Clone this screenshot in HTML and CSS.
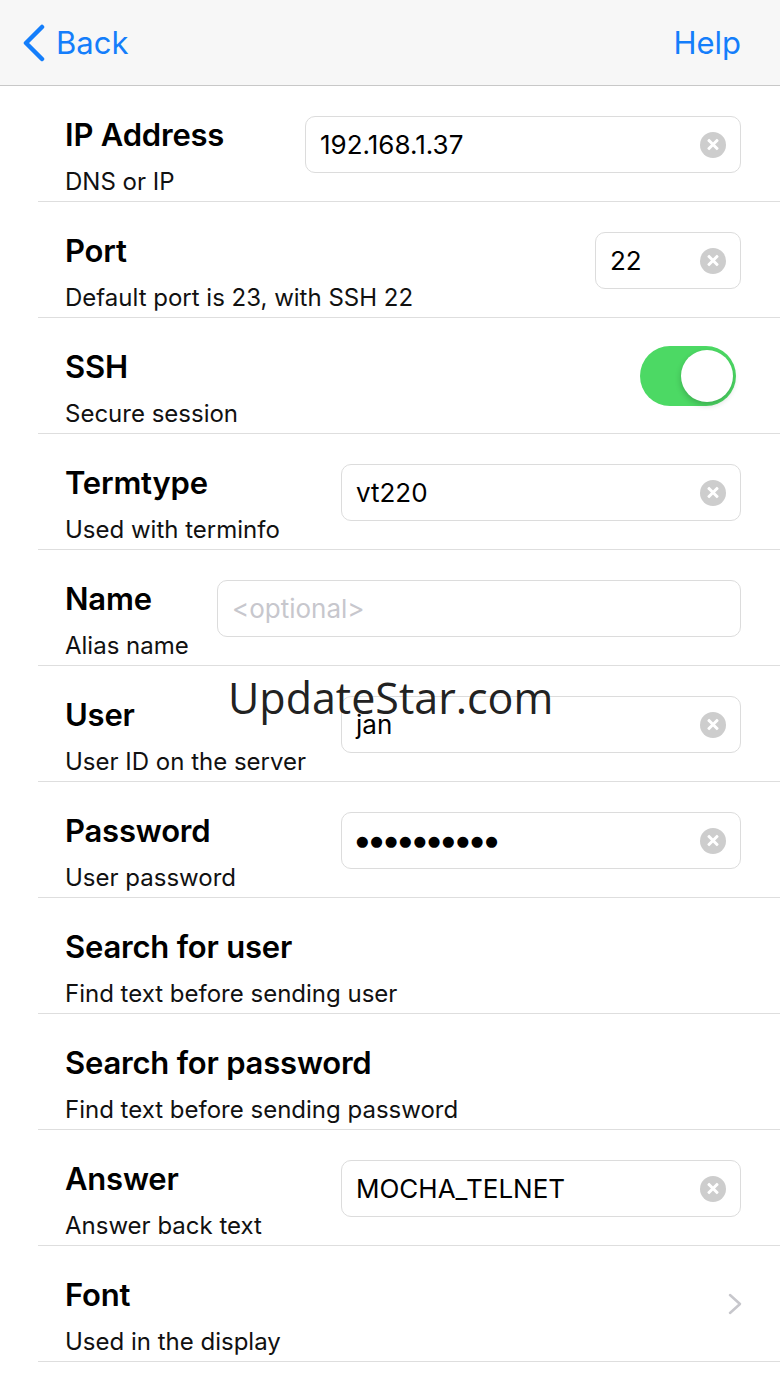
FILE: index.html
```html
<!DOCTYPE html>
<html lang="en">
<head>
    <meta charset="UTF-8">
    <meta name="viewport" content="width=device-width, initial-scale=1.0">
    <title>Connection Settings</title>
    <link rel="stylesheet" href="styles.css">
</head>
<body>

    <div class="nav-bar">
        <a class="nav-back" href="#">
            <svg class="back-chevron" width="24" height="38" viewBox="0 0 24 38">
                <path d="M20 3 L4 19 L20 35" fill="none" stroke="#147efb" stroke-width="4.5" stroke-linecap="round" stroke-linejoin="round"/>
            </svg>
            Back
        </a>
        <a class="nav-help" href="#">Help</a>
    </div>

    <div class="settings-list">
        <div class="setting-row">
            <div class="setting-text">
                <div class="setting-title">IP Address</div>
                <div class="setting-sub">DNS or IP</div>
            </div>
            <div class="field field-ip">
                <span class="field-value">192.168.1.37</span>
                <span class="clear-btn"></span>
            </div>
        </div>

        <div class="setting-row">
            <div class="setting-text">
                <div class="setting-title">Port</div>
                <div class="setting-sub">Default port is 23, with SSH 22</div>
            </div>
            <div class="field field-port">
                <span class="field-value">22</span>
                <span class="clear-btn"></span>
            </div>
        </div>

        <div class="setting-row">
            <div class="setting-text">
                <div class="setting-title">SSH</div>
                <div class="setting-sub">Secure session</div>
            </div>
            <div class="switch on">
                <div class="switch-knob"></div>
            </div>
        </div>

        <div class="setting-row">
            <div class="setting-text">
                <div class="setting-title">Termtype</div>
                <div class="setting-sub">Used with terminfo</div>
            </div>
            <div class="field">
                <span class="field-value">vt220</span>
                <span class="clear-btn"></span>
            </div>
        </div>

        <div class="setting-row">
            <div class="setting-text">
                <div class="setting-title">Name</div>
                <div class="setting-sub">Alias name</div>
            </div>
            <div class="field field-name">
                <span class="field-value placeholder">&lt;optional&gt;</span>
            </div>
        </div>

        <div class="setting-row">
            <div class="setting-text">
                <div class="setting-title">User</div>
                <div class="setting-sub">User ID on the server</div>
            </div>
            <div class="field">
                <span class="field-value">jan</span>
                <span class="clear-btn"></span>
            </div>
        </div>

        <div class="setting-row">
            <div class="setting-text">
                <div class="setting-title">Password</div>
                <div class="setting-sub">User password</div>
            </div>
            <div class="field">
                <span class="field-value password-dots">&#9679;&#9679;&#9679;&#9679;&#9679;&#9679;&#9679;&#9679;&#9679;&#9679;</span>
                <span class="clear-btn"></span>
            </div>
        </div>

        <div class="setting-row">
            <div class="setting-text">
                <div class="setting-title">Search for user</div>
                <div class="setting-sub">Find text before sending user</div>
            </div>
        </div>

        <div class="setting-row">
            <div class="setting-text">
                <div class="setting-title">Search for password</div>
                <div class="setting-sub">Find text before sending password</div>
            </div>
        </div>

        <div class="setting-row">
            <div class="setting-text">
                <div class="setting-title">Answer</div>
                <div class="setting-sub">Answer back text</div>
            </div>
            <div class="field">
                <span class="field-value">MOCHA_TELNET</span>
                <span class="clear-btn"></span>
            </div>
        </div>

        <div class="setting-row">
            <div class="setting-text">
                <div class="setting-title">Font</div>
                <div class="setting-sub">Used in the display</div>
            </div>
            <svg class="row-chevron" width="16" height="24" viewBox="0 0 16 24">
                <path d="M3 3 L13 12 L3 21" fill="none" stroke="#c7c7cc" stroke-width="2.5" stroke-linecap="round" stroke-linejoin="round"/>
            </svg>
        </div>
    </div>

    <!-- watermark over the list -->
    <div class="watermark">UpdateStar.com</div>

</body>
</html>
```

FILE: styles.css
```css
/* Base page */
body {
    font-family: Inter, "Noto Sans", "Liberation Sans", sans-serif;
    background-color: #ffffff;
    color: #000;
    margin: 0;
    position: relative;
}

/* Top navigation bar */
.nav-bar {
    height: 85px;
    background-color: #f7f7f7;
    border-bottom: 1px solid #c8c8c8;
    display: flex;
    justify-content: space-between;
    align-items: center;
    padding: 0 39px 0 22px;
}

.nav-bar a {
    color: #147efb;
    text-decoration: none;
    font-size: 31px;
    display: flex;
    align-items: center;
}

.back-chevron {
    margin-right: 10px;
}

/* The list of settings */
.settings-list {
    padding-left: 38px;
}

.setting-row {
    height: 116px;
    box-sizing: border-box;
    border-bottom: 1px solid #dedede;
    padding: 0 39px 0 27px;
    display: flex;
    justify-content: space-between;
    align-items: flex-start;
}

.setting-text {
    padding-top: 30px;
    flex-shrink: 0;
}

.setting-title {
    font-size: 31px;
    font-weight: 600;
    line-height: 38px;
    letter-spacing: -0.2px;
}

.setting-sub {
    font-size: 24px;
    line-height: 30px;
    margin-top: 13px;
    color: #111;
}

/* Text fields */
.field {
    width: 400px;
    height: 57px;
    box-sizing: border-box;
    margin-top: 30px;
    border: 1px solid #dcdcdc;
    border-radius: 10px;
    display: flex;
    align-items: center;
    justify-content: space-between;
    padding: 0 14px;
}

.field-ip {
    width: 436px;
}

.field-port {
    width: 146px;
}

.field-name {
    width: 524px;
}

.field-value {
    font-size: 26px;
    color: #000;
}

.placeholder {
    color: #c7c7cd;
}

.password-dots {
    font-family: "DejaVu Sans", sans-serif;
    font-size: 14.5px;
    letter-spacing: 1.7px;
}

/* Round grey clear button */
.clear-btn {
    width: 26px;
    height: 26px;
    border-radius: 50%;
    background-color: #cdcdcd;
    position: relative;
    flex-shrink: 0;
}

.clear-btn::before,
.clear-btn::after {
    content: "";
    position: absolute;
    left: 6px;
    top: 11.5px;
    width: 14px;
    height: 3px;
    border-radius: 1px;
    background-color: #fff;
    transform: rotate(45deg);
}

.clear-btn::after {
    transform: rotate(-45deg);
}

/* On/off switch */
.switch {
    width: 96px;
    height: 60px;
    margin-top: 28px;
    margin-right: 5px;
    border-radius: 30px;
    background-color: #e5e5ea;
    position: relative;
}

.switch.on {
    background-color: #4cd964;
}

.switch-knob {
    position: absolute;
    top: 4px;
    right: 3px;
    width: 52px;
    height: 52px;
    border-radius: 50%;
    background-color: #fff;
    box-shadow: 0 3px 6px rgba(0, 0, 0, 0.2);
}

.row-chevron {
    margin-top: 46px;
    margin-right: -2px;
}

/* Watermark text over the list */
.watermark {
    position: absolute;
    top: 668px;
    left: 228px;
    font-family: "Open Sans", sans-serif;
    font-size: 43px;
    color: #222;
    pointer-events: none;
}
```
